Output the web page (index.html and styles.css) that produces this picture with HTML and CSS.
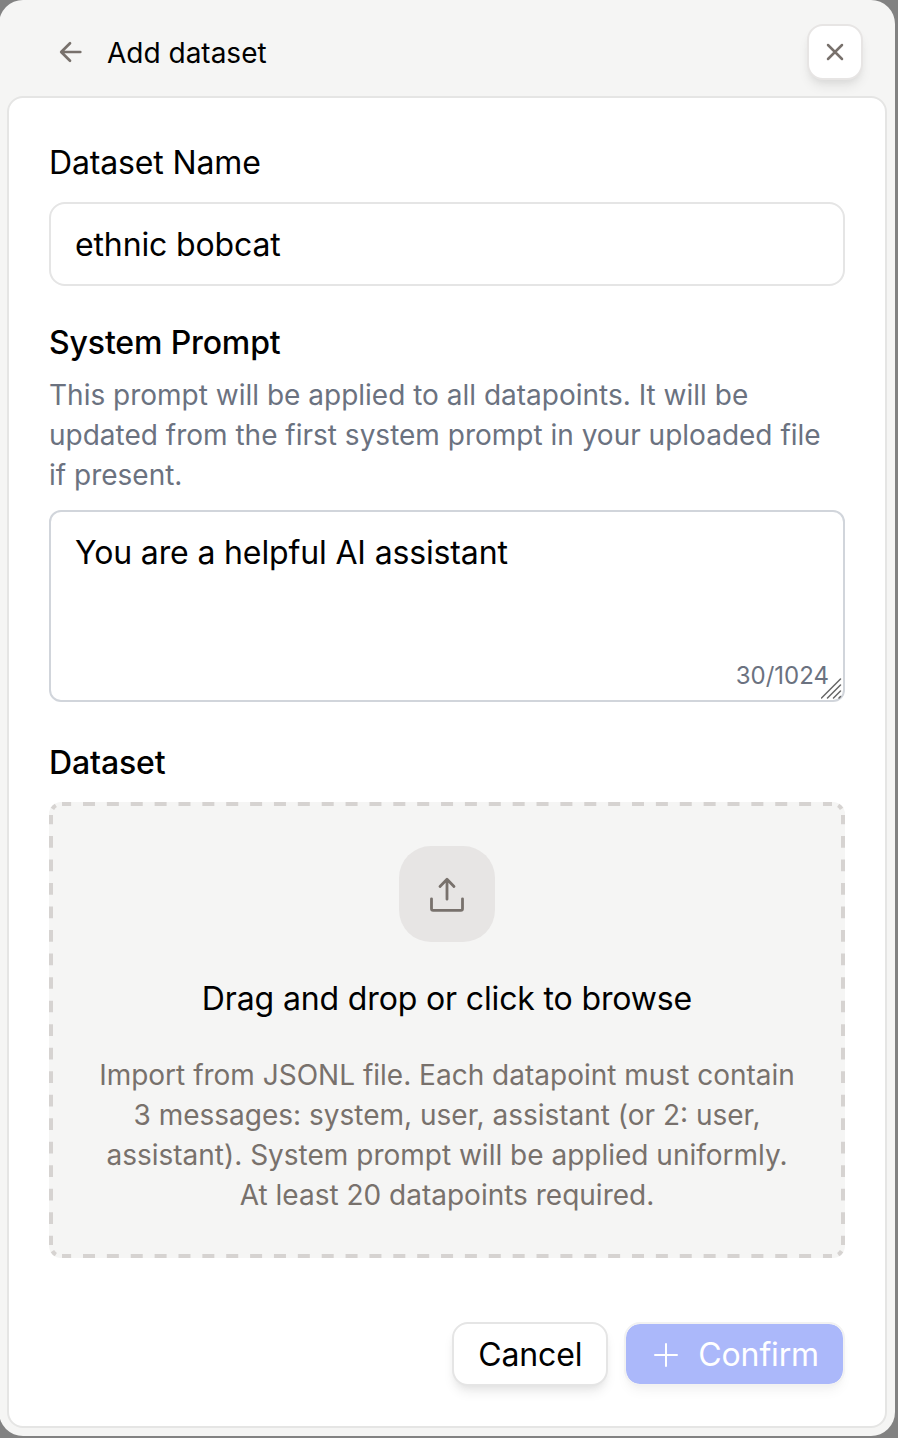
FILE: index.html
```html
<!DOCTYPE html>
<html lang="en">
<head>
<meta charset="utf-8">
<title>Add dataset</title>
<link rel="stylesheet" href="styles.css">
</head>
<body>
<main class="modal">
  <header class="header">
    <svg class="back" viewBox="0 0 24 24" width="24" height="24"><path d="M21.300 12H2.800M11 3.200L2.200 12l8.800 8.800"/></svg>
    <h1 class="title">Add dataset</h1>
    <button class="close" aria-label="Close"><svg viewBox="0 0 24 24" width="24" height="24"><path d="M5 5l14 14M19 5L5 19"/></svg></button>
  </header>
  <section class="panel">
    <h2 class="label label-regular">Dataset Name</h2>
    <div class="input">ethnic bobcat</div>
    <h2 class="label">System Prompt</h2>
    <p class="hint">This prompt will be applied to all datapoints. It will be updated from the first system prompt in your uploaded file if present.</p>
    <div class="textarea">
      <span>You are a helpful AI assistant</span>
      <span class="counter">30/1024</span>
      <svg class="grip" viewBox="0 0 22 22" width="22" height="22"><path d="M.5 20L19.500 1M6.500 20L19.500 7M12.500 20l7-7M18 20l1.500-1.500"/></svg>
    </div>
    <h2 class="label">Dataset</h2>
    <div class="dropzone">
      <svg class="dashes" viewBox="0 0 796 456" width="796" height="456">
        <path class="dash-x" d="M13 2H783M13 454H783"/>
        <path class="dash-y" d="M2 13V443M794 13V443"/>
        <path d="M3.400 6.850Q4.700 4.700 6.850 3.400M792.600 6.850Q791.300 4.700 789.150 3.400M3.400 449.150Q4.700 451.300 6.850 452.600M792.600 449.150Q791.300 451.300 789.150 452.600"/>
      </svg>
      <div class="upload"><svg viewBox="0 0 40 40" width="40" height="40"><path d="M20 25.200V5.300M13 12.400l7-7.200 7 7.200M4.500 24.800v10q0 1.600 1.600 1.600h27.800q1.600 0 1.600-1.600v-10"/></svg></div>
      <p class="drop-title">Drag and drop or click to browse</p>
      <p class="drop-text">Import from JSONL file. Each datapoint must contain 3 messages: system, user, assistant (or 2: user, assistant). System prompt will be applied uniformly. At least 20 datapoints required.</p>
    </div>
    <footer class="actions">
      <button class="btn">Cancel</button>
      <button class="btn btn-primary"><svg viewBox="0 0 24 24" width="24" height="24"><path d="M12 1v22M1 12h22"/></svg>Confirm</button>
    </footer>
  </section>
</main>
</body>
</html>
```
FILE: styles.css
```css
* { box-sizing: border-box; }
html, body { margin: 0; }
body {
  height: 1438px;
  overflow: hidden;
  background: #828282;
  color: #000;
  font: 400 32px/48px Inter, "Liberation Sans", sans-serif;
  letter-spacing: -0.14px;
}
h1, h2, p { margin: 0; font: inherit; }
svg { display: block; fill: none; stroke: #78716c; stroke-linecap: round; stroke-linejoin: round; }
.modal {
  width: 896px;
  height: 1436px;
  margin-left: -1px;
  padding: 0 8px 8px;
  border-radius: 24px;
  background: #f5f5f4;
}
.header {
  display: flex;
  align-items: center;
  height: 96px;
  padding: 8px 24px 0 52px;
}
.back { stroke-width: 2.7; }
.title { flex: 1; margin: 2px 0 0 24px; font-size: 28px; line-height: 40px; letter-spacing: 0; }
.close {
  display: grid;
  place-items: center;
  width: 56px;
  height: 56px;
  padding: 0;
  border: 2px solid #e7e5e4;
  border-radius: 16px;
  background: #fff;
  box-shadow: 0 8px 12px -2px rgba(0,0,0,.08), 0 4px 8px -4px rgba(0,0,0,.08);
}
.close svg { stroke-width: 2.5; }
.panel {
  display: flex;
  flex-direction: column;
  height: 1332px;
  padding: 40px;
  border: 2px solid #e5e5e4;
  border-radius: 16px;
  background: #fff;
}
.label { height: 48px; padding-top: 1px; font-weight: 500; }
.label-regular { font-weight: 400; }
.input {
  height: 84px;
  margin: 16px 0 32px;
  padding: 17px 24px;
  border: 2px solid #e5e5e5;
  border-radius: 16px;
}
.hint { margin: 9px 0 15px; color: #6b7280; font-size: 28px; line-height: 40px; letter-spacing: 0; }
.textarea {
  position: relative;
  height: 192px;
  margin-bottom: 36px;
  padding: 17px 24px;
  border: 2px solid #d1d5db;
  border-radius: 12px;
}
.counter { position: absolute; right: 14px; bottom: 8px; color: #6b7280; font-size: 24px; line-height: 32px; letter-spacing: 0; }
.grip { position: absolute; right: 0; bottom: 0; stroke: #666; stroke-width: 1.5; }
.dropzone {
  position: relative;
  display: flex;
  flex-direction: column;
  align-items: center;
  gap: 32px;
  height: 456px;
  margin: 16px 0 64px;
  padding: 44px 44px 43px;
  border-radius: 12px;
  background: #f5f5f4;
  text-align: center;
}
.dashes { position: absolute; inset: 0; stroke: #d6d3d1; stroke-width: 4; stroke-linecap: butt; }
.dash-x { stroke-dasharray: 12 11.870; stroke-dashoffset: 2.870; }
.dash-y { stroke-dasharray: 11.700 11.820; stroke-dashoffset: 2.500; }
.upload {
  display: grid;
  flex: none;
  place-items: center;
  width: 96px;
  height: 96px;
  border-radius: 32px;
  background: #e7e5e4;
}
.upload svg { stroke-width: 2.8; }
.drop-title { flex: none; height: 48px; padding-top: 1px; }
.drop-text { flex: none; padding-top: 1px; color: #78716c; font-size: 28px; line-height: 40px; letter-spacing: 0; }
.actions { display: flex; justify-content: flex-end; gap: 16px; }
.btn {
  display: flex;
  align-items: center;
  gap: 20px;
  height: 64px;
  padding: 2px 24px 0;
  border: 2px solid #e5e5e5;
  border-radius: 16px;
  background: #fff;
  color: #000;
  font: inherit;
  letter-spacing: inherit;
  box-shadow: 0 8px 12px -2px rgba(0,0,0,.08), 0 4px 8px -4px rgba(0,0,0,.08);
}
.btn-primary {
  border-color: #f2f2f2;
  background: #abb8fa;
  background-clip: padding-box;
  color: #fff;
  box-shadow: 0 8px 12px -2px rgba(0,0,0,.04), 0 4px 8px -4px rgba(0,0,0,.04);
}
.btn-primary svg { margin-left: 4px; stroke: #fff; stroke-width: 2; }
```
